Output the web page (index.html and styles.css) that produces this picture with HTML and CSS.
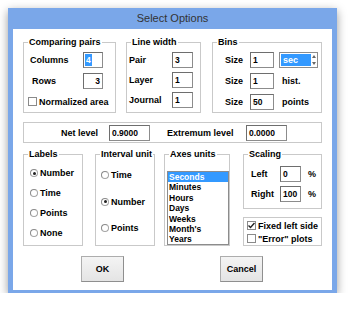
FILE: index.html
```html
<!doctype html>
<html>
<head>
<meta charset="utf-8">
<title>Select Options</title>
<link rel="stylesheet" href="styles.css">
</head>
<body>
<div class="window">
    <div class="titlebar">Select Options</div>
    <div class="client">
        <div class="top-row">
            <div class="group pairs">
                <div class="group-title">Comparing pairs</div>
                <div class="body">
                    <div class="row"><span class="lbl">Columns</span><span class="field"><span class="sel">4</span></span></div>
                    <div class="row"><span class="lbl indent">Rows</span><span class="field right">3</span></div>
                    <div class="row check-row"><span class="check"></span>Normalized area</div>
                </div>
            </div>
            <div class="group linew">
                <div class="group-title">Line width</div>
                <div class="body">
                    <div class="row"><span class="lbl">Pair</span><span class="field">3</span></div>
                    <div class="row"><span class="lbl">Layer</span><span class="field">1</span></div>
                    <div class="row"><span class="lbl">Journal</span><span class="field">1</span></div>
                </div>
            </div>
            <div class="group bins">
                <div class="group-title">Bins</div>
                <div class="body">
                    <div class="row"><span class="lbl">Size</span><span class="field">1</span>
                        <span class="combo"><span class="combo-val">sec</span><span class="spin"><i class="up"></i><i class="down"></i></span></span></div>
                    <div class="row"><span class="lbl">Size</span><span class="field">1</span><span class="unit">hist.</span></div>
                    <div class="row"><span class="lbl">Size</span><span class="field">50</span><span class="unit">points</span></div>
                </div>
            </div>
        </div>

        <div class="group levels">
            <span class="lbl net">Net level</span><span class="field">0.9000</span>
            <span class="lbl ext">Extremum level</span><span class="field">0.0000</span>
        </div>

        <div class="bottom-row">
            <div class="group labels">
                <div class="group-title">Labels</div>
                <div class="body">
                    <div class="row"><span class="radio on"></span>Number</div>
                    <div class="row"><span class="radio"></span>Time</div>
                    <div class="row"><span class="radio"></span>Points</div>
                    <div class="row"><span class="radio"></span>None</div>
                </div>
            </div>
            <div class="group interval">
                <div class="group-title">Interval unit</div>
                <div class="body">
                    <div class="row"><span class="radio"></span>Time</div>
                    <div class="row"><span class="radio on"></span>Number</div>
                    <div class="row"><span class="radio"></span>Points</div>
                </div>
            </div>
            <div class="group axes">
                <div class="group-title">Axes units</div>
                <ul class="listbox">
                    <li class="selected">Seconds</li>
                    <li>Minutes</li>
                    <li>Hours</li>
                    <li>Days</li>
                    <li>Weeks</li>
                    <li>Month's</li>
                    <li>Years</li>
                </ul>
            </div>
            <div class="right-col">
                <div class="group scaling">
                    <div class="group-title">Scaling</div>
                    <div class="body">
                        <div class="row"><span class="lbl">Left</span><span class="field">0</span><span class="unit">%</span></div>
                        <div class="row"><span class="lbl">Right</span><span class="field">100</span><span class="unit">%</span></div>
                    </div>
                </div>
                <div class="group fixed">
                    <div class="body">
                        <div class="row"><span class="check on"><svg width="7" height="7" viewBox="0 0 7 7"><path d="M0.5 3.5 L2.5 5.5 L6.5 1" fill="none" stroke="#222" stroke-width="1.4"/></svg></span>Fixed left side</div>
                        <div class="row"><span class="check"></span>"Error" plots</div>
                    </div>
                </div>
            </div>
        </div>

        <div class="buttons">
            <button class="btn">OK</button>
            <button class="btn">Cancel</button>
        </div>
    </div>
</div>
</body>
</html>
```

FILE: styles.css
```css
body{
    margin:0;
    background:#fff;
    font-family:"Liberation Sans", Arial, sans-serif;
    font-size:9px;
    font-weight:bold;
    color:#000;
    }
ul{
    margin:0;
    padding:0;
    list-style:none;
    }
.window{
    width:329px;
    height:285px;
    margin:8px 0 0 8px;
    box-sizing:border-box;
    padding:0 5px;
    background:#7aa7e9;
    box-shadow:0 3px 9px rgba(0,0,0,0.4);
    }
.titlebar{
    height:21px;
    line-height:21px;
    text-align:center;
    font-size:11px;
    font-weight:normal;
    color:#333;
    }
.client{
    height:261px;
    box-sizing:border-box;
    padding:13px 10px 0 10px;
    background:#fff;
    }

/* group boxes */
.group{
    box-sizing:border-box;
    border:1px solid #c9c9c9;
    }
.group-title{
    width:fit-content;
    height:13px;
    line-height:13px;
    margin:-7px 0 0 4px;
    padding:0 1px;
    background:#fff;
    }
.row{
    display:flex;
    align-items:center;
    white-space:nowrap;
    }
.lbl{
    flex:none;
    }
.field{
    flex:none;
    box-sizing:border-box;
    height:16px;
    border:1px solid #8c8c8c;
    border-top-color:#6e6e6e;
    border-left-color:#6e6e6e;
    padding:0 2px;
    display:flex;
    align-items:center;
    font-size:8.5px;
    background:#fff;
    }
.field.right{
    justify-content:flex-end;
    }
.sel{
    background:#3399ff;
    color:#fff;
    line-height:12px;
    padding:0 1px;
    margin-left:-1px;
    }

.top-row{
    display:flex;
    height:71px;
    }
.pairs{ width:93px; }
.linew{ width:75px; margin-left:10px; }
.bins{ width:110px; margin-left:11px; }

.pairs .row{ height:21px; padding-left:6px; }
.pairs .lbl{ width:53px; }
.pairs .lbl.indent{ padding-left:2px; width:51px; }
.pairs .field{ width:20px; }
.pairs .check-row{ padding-left:4px; }

.linew .body{ padding-top:1px; }
.linew .row{ height:20px; padding-left:2px; }
.linew .lbl{ width:43px; }
.linew .field{ width:21px; }

.bins .row{ height:21px; padding-left:12px; }
.bins .lbl{ width:25px; }
.bins .field{ width:24px; }
.bins .unit{ margin-left:8px; }

.combo{
    box-sizing:border-box;
    width:39px;
    height:16px;
    margin-left:5px;
    display:flex;
    border:1px solid #8c8c8c;
    background:#fff;
    }
.combo-val{
    flex:1;
    margin:1px 0 1px 1px;
    padding-left:2px;
    background:#3399ff;
    color:#fff;
    line-height:12px;
    }
.spin{
    width:6px;
    display:flex;
    flex-direction:column;
    justify-content:space-between;
    align-items:center;
    padding:2px 0;
    }
.spin i{
    width:0;
    height:0;
    border-left:2px solid transparent;
    border-right:2px solid transparent;
    }
.spin .up{ border-bottom:3px solid #666; }
.spin .down{ border-top:3px solid #666; }

.levels{
    display:flex;
    align-items:center;
    height:21px;
    margin-top:9px;
    padding-left:37px;
    }
.levels .field{ width:41px; }
.levels .net{ width:48px; }
.levels .ext{ width:79px; margin-left:17px; }

.bottom-row{
    display:flex;
    height:92px;
    margin-top:11px;
    }
.labels{ width:60px; }
.interval{ width:60px; margin-left:12px; }
.axes{ width:66px; margin-left:9px; }
.right-col{
    width:79px;
    margin-left:13px;
    display:flex;
    flex-direction:column;
    gap:8px;
    }

.labels .body{ padding:2px 0 0 6px; }
.labels .row{ height:20px; }
.interval .body{ padding:1px 0 0 5px; }
.interval .row{ height:26.5px; }

.radio{
    flex:none;
    box-sizing:border-box;
    width:8px;
    height:8px;
    margin-right:2px;
    border-radius:50%;
    border:1px solid #a5a5a5;
    border-top-color:#8a8a8a;
    border-left-color:#8a8a8a;
    background:#fff;
    display:flex;
    align-items:center;
    justify-content:center;
    }
.radio.on::after{
    content:"";
    width:3px;
    height:3px;
    border-radius:50%;
    background:#222;
    }
.check{
    flex:none;
    box-sizing:border-box;
    width:9px;
    height:9px;
    margin-right:2px;
    border:1px solid #8a8a8a;
    background:#fff;
    display:flex;
    align-items:center;
    justify-content:center;
    }
.check svg{ display:block; }

.listbox{
    box-sizing:border-box;
    width:62px;
    height:74px;
    margin:10px 0 0 2px;
    border:1px solid #8c8c8c;
    overflow:hidden;
    font-size:8.5px;
    }
.listbox li{
    height:10.4px;
    line-height:10.4px;
    padding-left:1px;
    }
.listbox .selected{
    background:#3399ff;
    color:#fff;
    }

.scaling{ height:55px; }
.scaling .body{ padding:3px 0 0 7px; }
.scaling .row{ height:20px; }
.scaling .lbl{ width:29px; }
.scaling .field{ width:21px; }
.scaling .unit{ margin-left:7px; }

.fixed{ height:29px; }
.fixed .body{ padding:1px 0 0 3px; }
.fixed .row{ height:13px; }

.buttons{
    display:flex;
    gap:96px;
    margin-top:10px;
    padding-left:58px;
    }
.btn{
    width:43px;
    height:26px;
    padding:0;
    font-family:"Liberation Sans", Arial, sans-serif;
    font-size:9px;
    font-weight:bold;
    color:#000;
    border:1px solid #adadad;
    border-right-color:#8f8f8f;
    border-bottom-color:#8f8f8f;
    background:linear-gradient(#f4f4f4, #e4e4e4);
    }
```
